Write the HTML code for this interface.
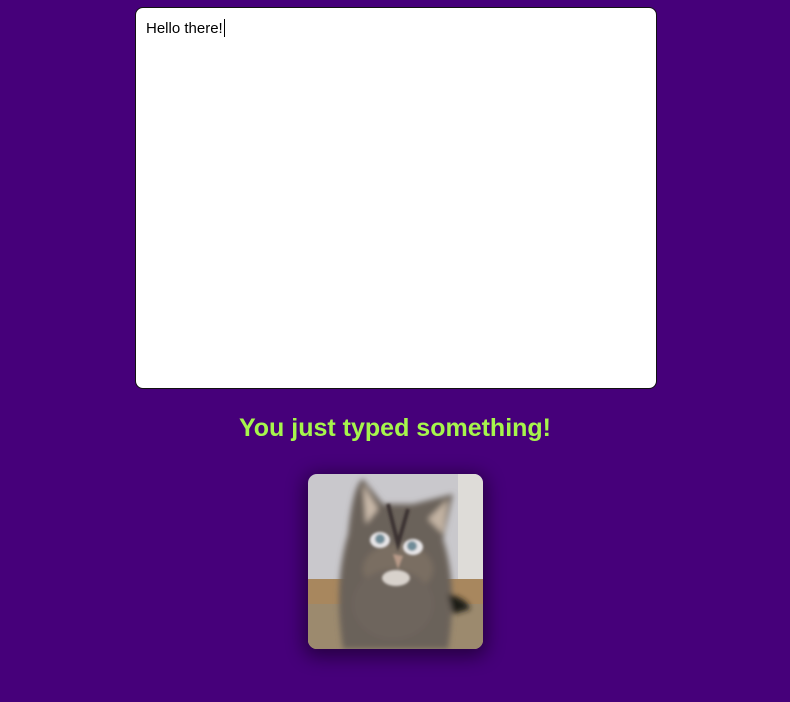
<!DOCTYPE html>
<html><head><style>
html,body{margin:0;height:100%;background:#46007a;}
body{width:790px;height:702px;position:relative;overflow:hidden;font-family:"Liberation Sans",sans-serif;}
.ta{position:absolute;left:135px;top:7px;width:520px;height:380px;background:#fff;border:1px solid #111;border-radius:8px;box-sizing:content-box;}
.ta span{position:absolute;left:10px;top:11px;font-size:15px;color:#000;}
.ta i{display:inline-block;width:1px;height:18px;background:#000;vertical-align:-4px;margin-left:1px;}
h1{position:absolute;left:0;width:790px;top:414px;margin:0;text-align:center;font-size:25px;font-weight:bold;color:#a6f54c;}
.cat{position:absolute;left:308px;top:474px;width:175px;height:175px;border-radius:9px;overflow:hidden;box-shadow:0 4px 18px 4px rgba(0,0,0,0.45);}
</style></head><body>
<div class="ta"><span>Hello there!<i></i></span></div>
<h1>You just typed something!</h1>
<div class="cat"><svg width="175" height="175" viewBox="0 0 175 175">
<defs>
<filter id="b"><feGaussianBlur stdDeviation="3"/></filter>
<filter id="b2"><feGaussianBlur stdDeviation="1.2"/></filter>
</defs>
<rect width="175" height="175" fill="#c9c8cc"/>
<rect x="150" width="25" height="110" fill="#dedcd8"/>
<rect y="105" width="175" height="70" fill="#a8875e"/>
<rect y="130" width="175" height="45" fill="#9c8a6e"/>
<g filter="url(#b)">
<path d="M40 60 Q45 10 55 5 L75 30 L105 30 L145 20 L135 65 Q150 110 140 175 L35 175 Q25 110 40 60Z" fill="#6b625a"/>
<path d="M55 10 L70 35 L58 50Z" fill="#c8b8a8"/>
<path d="M140 25 L120 45 L135 60Z" fill="#c2b2a2"/>
<ellipse cx="90" cy="95" rx="35" ry="25" fill="#7a6e62"/>
<ellipse cx="85" cy="130" rx="40" ry="35" fill="#6e655d"/>
<path d="M140 120 Q160 125 162 135 L145 140Z" fill="#1e1a18"/>
</g>
<g filter="url(#b2)">
<ellipse cx="72" cy="66" rx="10" ry="8" fill="#e8e6e8"/>
<ellipse cx="105" cy="73" rx="10" ry="8" fill="#e8e6e8"/>
<circle cx="72" cy="65" r="5" fill="#6f8c98"/>
<circle cx="104" cy="72" r="5" fill="#6f8c98"/>
<path d="M85 80 L95 82 L90 95Z" fill="#b89a88"/>
<ellipse cx="88" cy="104" rx="14" ry="8" fill="#d8d2cc"/>
<path d="M80 30 L90 70 L100 35" fill="none" stroke="#3a3230" stroke-width="4"/>
</g>
</svg></div>
</body></html>
